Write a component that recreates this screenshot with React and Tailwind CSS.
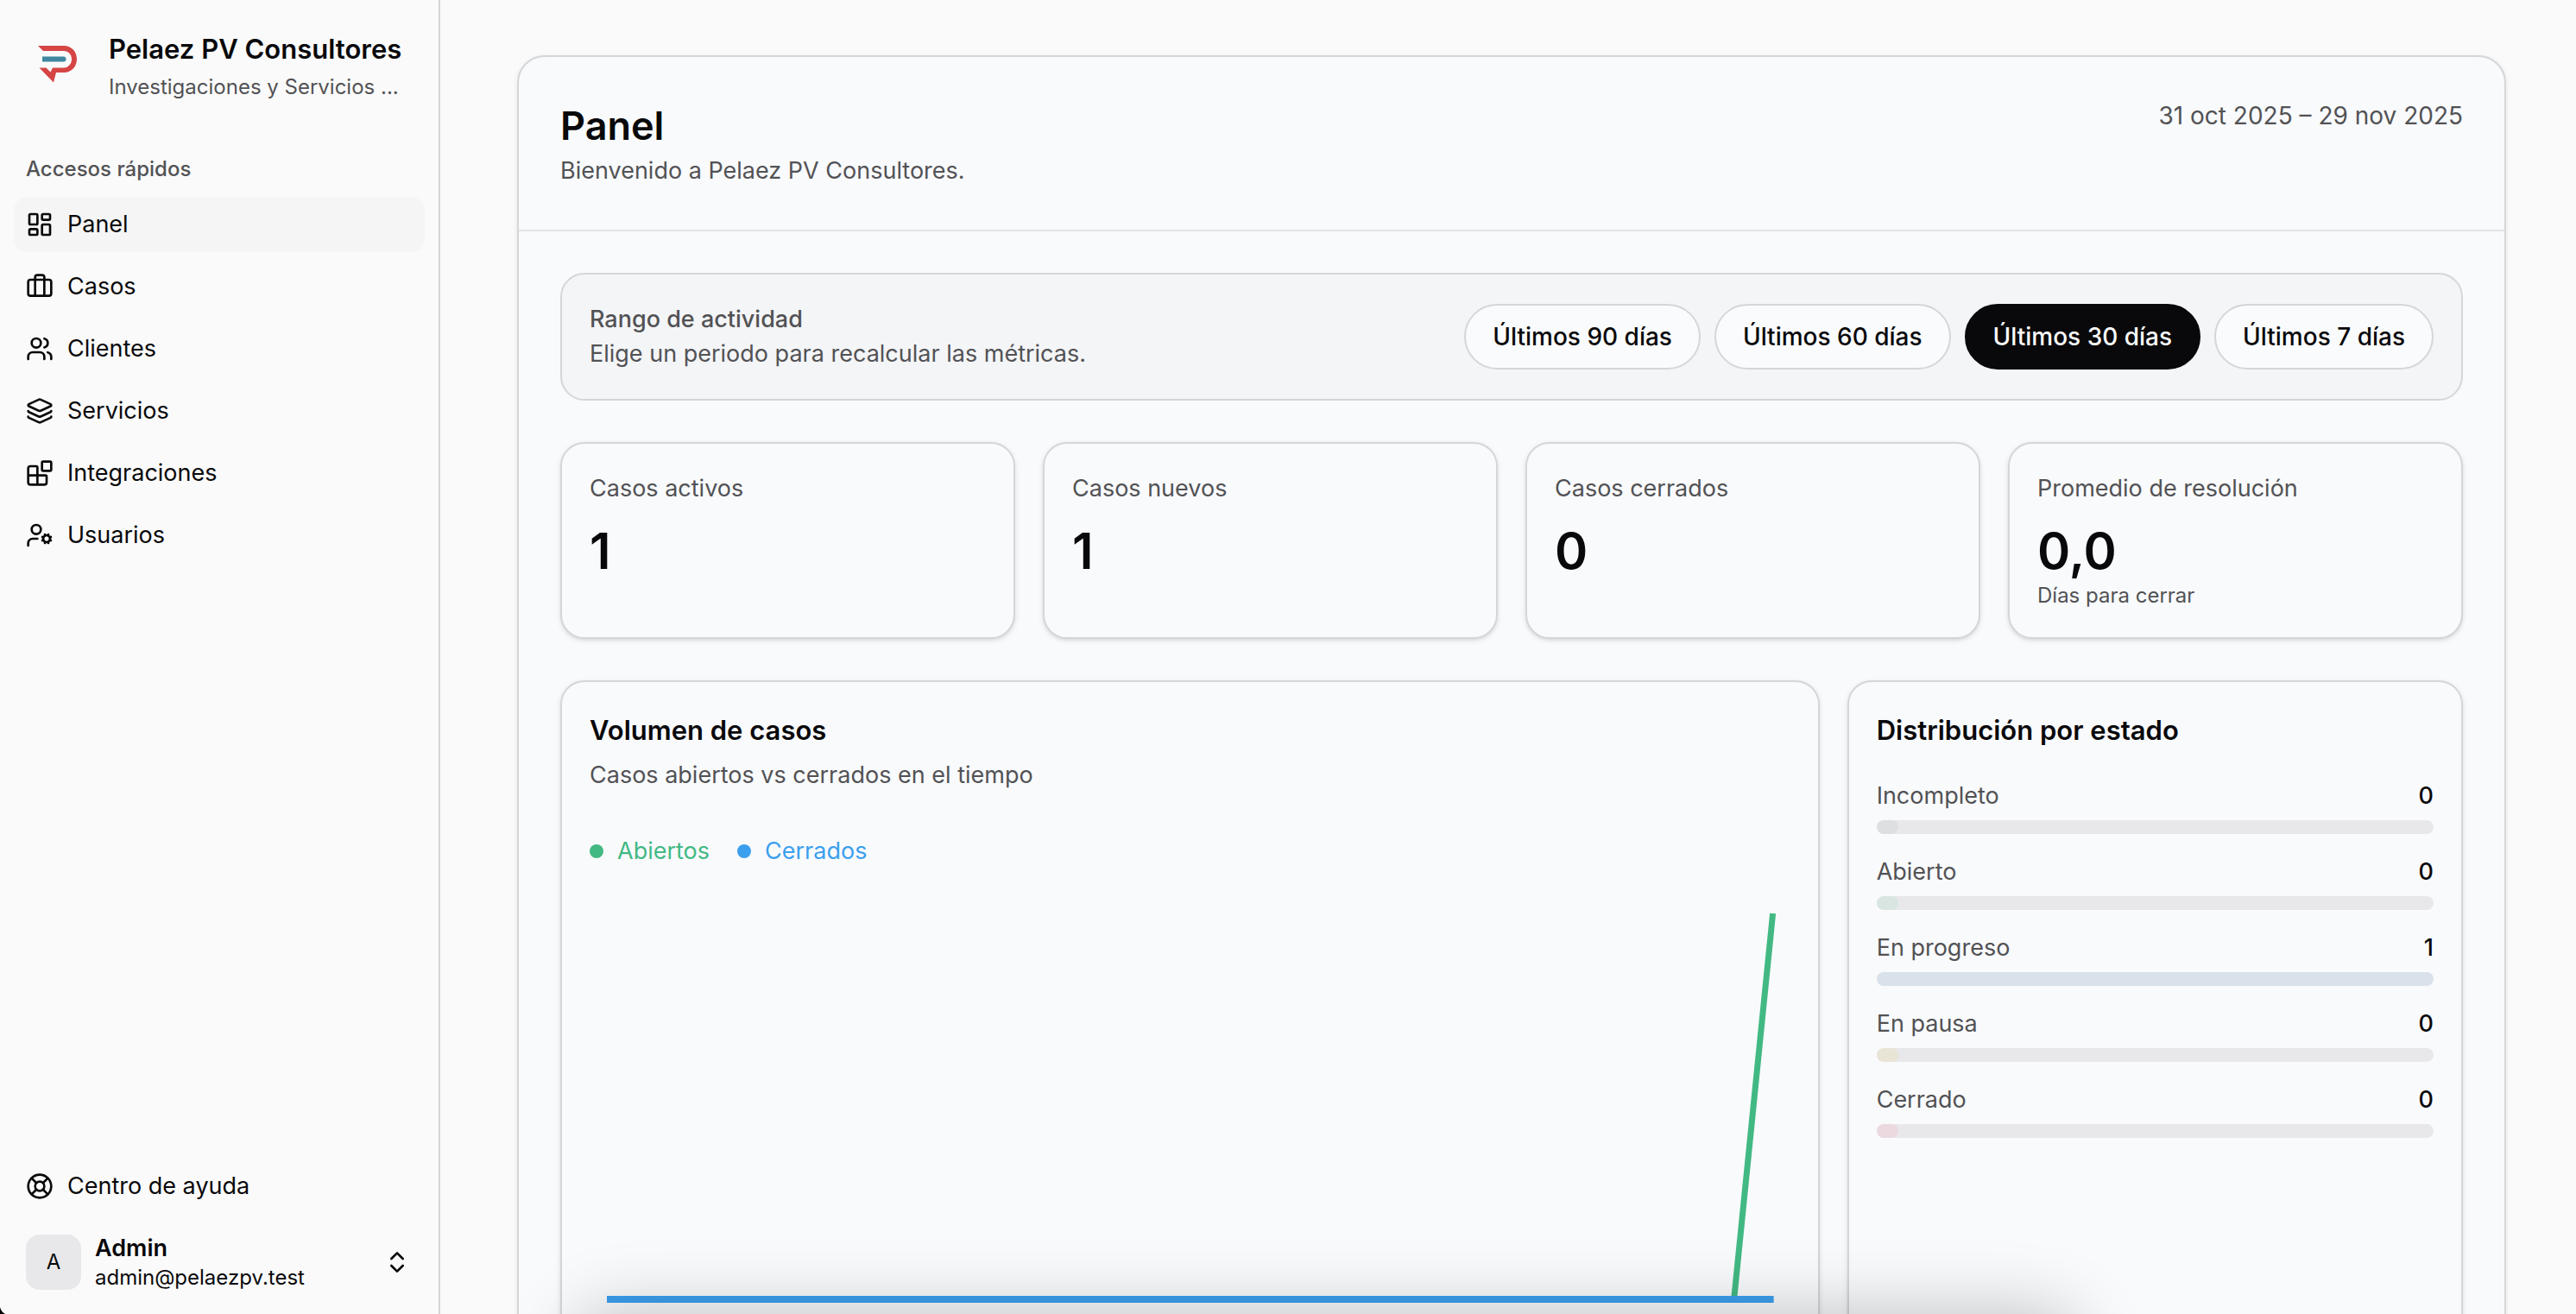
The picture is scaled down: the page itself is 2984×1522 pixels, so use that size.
import {
  LayoutDashboard,
  Briefcase,
  Users,
  Layers,
  Blocks,
  UserCog,
  LifeBuoy,
  ChevronsUpDown,
} from "lucide-react";

function Logo() {
  return (
    <svg viewBox="0 0 46 43" className="h-[43px] w-[46px] shrink-0" aria-hidden="true">
      <path d="M0 0H30C39 0 45 7 45 15.500C45 24 39 31 30 31H21L18 42.500L1.500 25.500H9.500L14.500 30.500L17 25.500H30C35 25.500 39 21 39 15.500C39 10 35 6 30 6H6Z" fill="#d64545" />
      <path d="M5 12.500H29.500Q32.500 12.500 32.500 15.500Q32.500 18.500 29.500 18.500H5Z" fill="#3f87a0" />
    </svg>
  );
}

const nav = [
  ["Panel", LayoutDashboard],
  ["Casos", Briefcase],
  ["Clientes", Users],
  ["Servicios", Layers],
  ["Integraciones", Blocks],
  ["Usuarios", UserCog],
];

function NavLink({ label, icon: Glyph, active }) {
  return (
    <a
      href="#"
      aria-current={active ? "page" : undefined}
      className={
        active
          ? "flex h-16 items-center gap-4 rounded-2xl bg-[#f5f5f5] px-[14px] text-[27px]"
          : "flex h-16 items-center gap-4 rounded-2xl px-[14px] text-[27px]"
      }
    >
      <Glyph className="size-8 shrink-0" />
      {label}
    </a>
  );
}

function Sidebar() {
  return (
    <aside className="flex w-[510px] shrink-0 flex-col border-r-2 border-[#d4d5d6] px-4">
      <div className="flex h-[148px] items-center gap-9 pl-7">
        <Logo />
        <div className="min-w-0 pt-3.5 whitespace-nowrap">
          <p className="text-[31px] leading-10 font-semibold">Pelaez PV Consultores</p>
          <p className="text-[24px] leading-12 text-[#525255]">Investigaciones y Servicios ...</p>
        </div>
      </div>
      <nav aria-labelledby="accesos" className="mt-6 flex flex-col gap-2">
        <h2 id="accesos" className="flex h-12 items-center px-[14px] text-[24px] font-medium text-[#525255]">
          Accesos rápidos
        </h2>
        {nav.map(([label, icon], i) => (
          <NavLink key={label} label={label} icon={icon} active={i === 0} />
        ))}
      </nav>
      <div className="mt-auto pb-1">
        <NavLink label="Centro de ayuda" icon={LifeBuoy} />
        <button type="button" className="flex h-28 w-full items-center gap-4 pr-4 pl-[14px] text-left">
          <span className="flex size-16 items-center justify-center rounded-2xl bg-[#e8e8ea] text-[24px]">A</span>
          <span className="min-w-0 flex-1">
            <span className="block text-[27px] leading-9 font-semibold">Admin</span>
            <span className="block text-[24px] leading-8">admin@pelaezpv.test</span>
          </span>
          <ChevronsUpDown className="size-8" />
        </button>
      </div>
    </aside>
  );
}

const ranges = ["Últimos 90 días", "Últimos 60 días", "Últimos 30 días", "Últimos 7 días"];

const stats = [
  ["Casos activos", "1"],
  ["Casos nuevos", "1"],
  ["Casos cerrados", "0"],
  ["Promedio de resolución", "0,0", "Días para cerrar"],
];

const states = [
  ["Incompleto", 0, "bg-[#dedfe1]"],
  ["Abierto", 0, "bg-[#d9e5e0]"],
  ["En progreso", 1, "bg-[#d9e2eb]"],
  ["En pausa", 0, "bg-[#e8e4d6]"],
  ["Cerrado", 0, "bg-[#ecd9df]"],
];

function Chart() {
  return (
    <svg viewBox="0 0 1390 520" preserveAspectRatio="none" className="mt-8 h-[520px] w-full" role="img" aria-label="Casos abiertos y cerrados">
      <path d="M1325 467L1370 20" stroke="#42b983" strokeWidth="7" fill="none" />
      <path d="M20 467H1371" stroke="#3b9fee" strokeWidth="8" fill="none" />
    </svg>
  );
}

function RangePicker() {
  return (
    <section className="flex items-center justify-between rounded-[28px] border-2 border-[#d5d6d8] bg-[#f4f5f7] p-8">
      <div className="text-[27px] leading-10 text-[#525255]">
        <h2 className="font-medium">Rango de actividad</h2>
        <p>Elige un periodo para recalcular las métricas.</p>
      </div>
      <div className="flex gap-4">
        {ranges.map((label, i) => (
          <button
            key={label}
            type="button"
            aria-pressed={i === 2}
            className={
              i === 2
                ? "h-19 rounded-full border-2 border-[#09090b] bg-[#09090b] px-[31px] text-[28px] font-medium text-[#fafafa]"
                : "h-19 rounded-full border-2 border-[#d5d6d8] bg-[#fafbfc] px-[31px] text-[28px] font-medium"
            }
          >
            {label}
          </button>
        ))}
      </div>
    </section>
  );
}

const card = "rounded-[28px] border-2 border-[#d5d6d8] bg-[#f9fafc] p-8 shadow-[0_2px_6px_rgba(0,0,0,0.1),0_2px_4px_-2px_rgba(0,0,0,0.1)]";

export default function App() {
  return (
    <div className="relative flex h-screen overflow-hidden bg-[#fafafa] font-[Inter,sans-serif] text-[#09090b]">
      <Sidebar />
      <main className="min-w-0 flex-1 pt-16 pr-[81px] pl-[89px]">
        <div className="rounded-[32px] border-2 border-[#d5d6d8] bg-[#f9fafc] pb-12 shadow-[0_2px_6px_rgba(0,0,0,0.08)]">
          <header className="flex items-start justify-between border-b-2 border-[#e3e4e6] p-12 leading-10 text-[#525255]">
            <div>
              <h1 className="text-[45px] leading-16 font-semibold text-[#09090b]">Panel</h1>
              <p className="text-[27px] leading-10">Bienvenido a Pelaez PV Consultores.</p>
            </div>
            <p className="text-[28px] leading-10">31 oct 2025 – 29 nov 2025</p>
          </header>
          <div className="flex flex-col gap-12 p-12">
            <RangePicker />
            <section className="grid grid-cols-4 gap-8">
              {stats.map(([label, value, note]) => (
                <article key={label} className={card}>
                  <h3 className="text-[27px] leading-10 text-[#525255]">{label}</h3>
                  <p className="mt-4 text-[58px] leading-18 font-semibold">{value}</p>
                  {note && <p className="text-[24px] leading-8 text-[#525255]">{note}</p>}
                </article>
              ))}
            </section>
            <section className="grid grid-cols-3 gap-8">
              <article className={`${card} col-span-2`}>
                <h2 className="text-[31px] leading-12 font-semibold">Volumen de casos</h2>
                <p className="mt-2 text-[27px] leading-10 text-[#525255]">Casos abiertos vs cerrados en el tiempo</p>
                <ul className="mt-12 flex gap-8 text-[27px] leading-10">
                  <li className="flex items-center gap-4 text-[#42b983]">
                    <span className="size-4 rounded-full bg-[#42b983]" />
                    Abiertos
                  </li>
                  <li className="flex items-center gap-4 text-[#3b9fee]">
                    <span className="size-4 rounded-full bg-[#3b9fee]" />
                    Cerrados
                  </li>
                </ul>
                <Chart />
              </article>
              <article className={card}>
                <h2 className="text-[31px] leading-12 font-semibold">Distribución por estado</h2>
                <ul className="mt-8 flex flex-col gap-6">
                  {states.map(([label, value, color]) => (
                    <li key={label}>
                      <div className="flex justify-between text-[27px] leading-10">
                        <span className="text-[#525255]">{label}</span>
                        <span className="font-medium">{value}</span>
                      </div>
                      <div className="mt-2 h-4 overflow-hidden rounded-full bg-[#e8e8ea]">
                        <div className={`h-full rounded-full ${color}`} style={{ width: value ? "100%" : "4%" }} />
                      </div>
                    </li>
                  ))}
                </ul>
              </article>
            </section>
          </div>
        </div>
      </main>
      <div className="pointer-events-none absolute -bottom-44 left-[23%] h-40 w-[57%] rounded-3xl shadow-[0_0_80px_20px_rgba(0,0,0,0.22)]" />
      <svg viewBox="0 0 6 8" className="absolute bottom-0 left-0 h-2 w-1.5" aria-hidden="true">
        <path d="M0 0Q1 5 6 8H0Z" fill="#000" />
      </svg>
    </div>
  );
}
